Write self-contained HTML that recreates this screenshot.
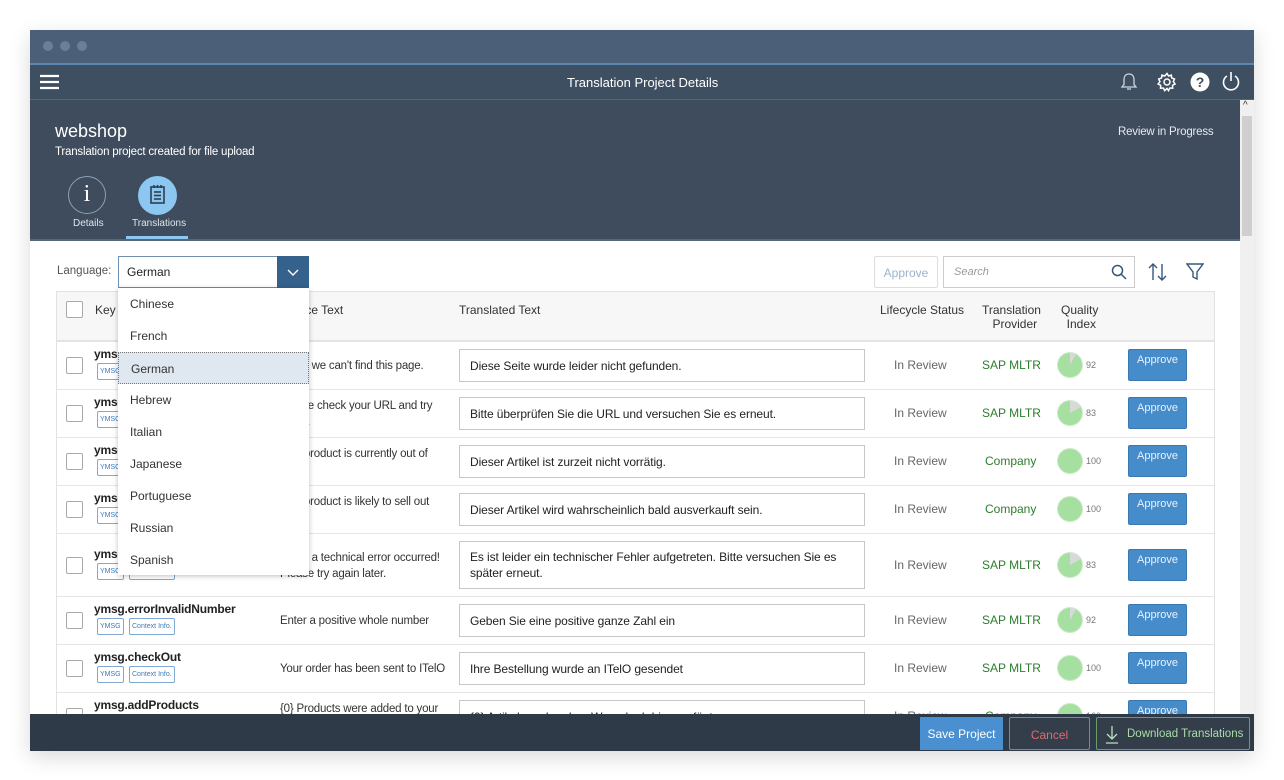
<!DOCTYPE html>
<html><head><meta charset="utf-8"><style>
*{box-sizing:border-box;margin:0;padding:0}
body{width:1284px;height:780px;background:#fff;font-family:"Liberation Sans",Arial,sans-serif;position:relative;overflow:hidden;font-size:12px;color:#333}
.win{position:absolute;left:30px;top:30px;width:1224px;height:721px;background:#fff;box-shadow:0 6px 20px rgba(0,0,0,.15);overflow:hidden}
.tb{position:absolute;left:0;top:0;width:1224px;height:35px;background:#4b5f78;border-bottom:2px solid #5b86b0}
.dot{position:absolute;top:11px;width:10px;height:10px;border-radius:50%;background:#6c7f95}
.sh{position:absolute;left:0;top:35px;width:1224px;height:35px;background:#3f4f62;border-bottom:1px solid #56667a;color:#fff}
.oh{position:absolute;left:0;top:70px;width:1210px;height:141px;background:#3e4c5d;color:#fff;border-bottom:2px solid #56677a}
.sb{position:absolute;left:1210px;top:70px;width:14px;height:614px;background:#f0f0f0}
.abs{position:absolute}
.t{position:absolute;white-space:nowrap}
.cb{position:absolute;width:17px;height:17px;border:1px solid #aaa;background:#fff;border-radius:2px}
.inp{position:absolute;left:459px;width:406px;background:#fff;border:1px solid #c7c7c7;font-size:12px;color:#222;padding:0 10px;display:flex;align-items:center;line-height:16px;letter-spacing:-0.1px}
.ab{position:absolute;left:1128px;width:59px;height:32px;background:#468ccb;border:1px solid #3a78b0;border-radius:2px;color:#e9f2fb;font-size:11px;text-align:center;padding-top:4px}
.tag{position:absolute;height:17px;border:1px solid #7ea9d4;border-radius:2px;color:#3b7bbd;font-size:7px;padding:4px 2px 0;background:#fff}
.pie{position:absolute;left:1057px;width:26px;height:26px;border-radius:50%;border:1px solid #cfe9cd}
.num{position:absolute;left:1086px;font-size:9px;color:#777}
.dd div{height:32px;padding:9px 12px;font-size:12px;color:#333}
</style></head><body>
<div class="win">
 <div class="tb"><div class="dot" style="left:13px"></div><div class="dot" style="left:30px"></div><div class="dot" style="left:47px"></div></div>
 <div class="sh">
  <svg class="abs" style="left:10px;top:9px" width="20" height="16"><g stroke="#fff" stroke-width="2.2"><line x1="0" y1="2" x2="19" y2="2"/><line x1="0" y1="8" x2="19" y2="8"/><line x1="0" y1="14" x2="19" y2="14"/></g></svg>
  <div class="t" style="left:537px;top:10px;font-size:13px">Translation Project Details</div>
  <svg class="abs" style="left:1090px;top:7px" width="18" height="20" fill="none" stroke="#cfd6de" stroke-width="1.3"><path d="M9 2c-3.5 0-5 2.5-5 5.5v5L2 15h14l-2-2.5v-5C14 4.5 12.5 2 9 2z"/><path d="M7 17h4"/></svg>
  <svg class="abs" style="left:1127px;top:7px" width="20" height="20" fill="none" stroke="#fff" stroke-width="1.5"><circle cx="10" cy="10" r="3"/><path d="M10 1.5l1.5 2.5 2.8-.9.4 2.9 2.8 1-1.2 2.7 1.8 2.3-2.6 1.3.2 2.9-2.9-.2-1.3 2.6L10 16.5 7.7 18.6 6.4 16l-2.9.2.2-2.9L1.1 12l1.8-2.3L1.7 7 4.5 6l.4-2.9 2.8.9z"/></svg>
  <svg class="abs" style="left:1160px;top:7px" width="20" height="20"><circle cx="10" cy="10" r="9.5" fill="#fff"/><text x="10" y="15" text-anchor="middle" font-family="Liberation Sans" font-weight="bold" font-size="14" fill="#3f4f62">?</text></svg>
  <svg class="abs" style="left:1191px;top:6px" width="20" height="21" fill="none" stroke="#fff" stroke-width="1.6"><path d="M6 5a7.5 7.5 0 1 0 8 0"/><line x1="10" y1="1" x2="10" y2="10"/></svg>
 </div>
 <div class="oh">
  <div class="t" style="left:25px;top:21px;font-size:18px">webshop</div>
  <div class="t" style="left:25px;top:46px;font-size:11.5px;letter-spacing:-0.2px">Translation project created for file upload</div>
  <div class="abs" style="left:38px;top:76px;width:38px;height:38px;border-radius:50%;border:1.5px solid #8fa0b2;text-align:center;font-family:'Liberation Serif',serif;font-size:24px;line-height:34px;color:#fff">i</div>
  <div class="t" style="left:43px;top:118px;font-size:10px;color:#dfe5ea">Details</div>
  <div class="abs" style="left:108px;top:76px;width:39px;height:39px;border-radius:50%;background:#8cc7f2"><svg class="abs" style="left:12px;top:9px" width="15" height="20" fill="none" stroke="#2d3e50" stroke-width="1.6"><rect x="1" y="2" width="13" height="16"/><line x1="4" y1="7" x2="11" y2="7"/><line x1="4" y1="10.5" x2="11" y2="10.5"/><line x1="4" y1="14" x2="11" y2="14"/><line x1="4" y1="0" x2="4" y2="3"/><line x1="7.5" y1="0" x2="7.5" y2="3"/><line x1="11" y1="0" x2="11" y2="3"/></svg></div>
  <div class="t" style="left:102px;top:118px;font-size:10px;color:#dfe5ea">Translations</div>
  <div class="abs" style="left:96px;top:136px;width:62px;height:3px;background:#8cc7f2"></div>
  <div class="t" style="left:1088px;top:26px;font-size:11.5px;color:#e6eaee;letter-spacing:-0.2px">Review in Progress</div>
 </div>
 <div class="sb"><div class="t" style="left:3px;top:0;font-size:10px;color:#333">^</div><div class="abs" style="left:2px;top:16px;width:10px;height:120px;background:#cfcfcf"></div></div>
</div>
<div class="t" style="left:57px;top:265px;color:#555;font-size:11.5px">Language:</div>
<div class="abs" style="left:874px;top:256px;width:64px;height:32px;border:1px solid #ddd;border-radius:2px;color:#9ab4cc;text-align:center;padding-top:9px">Approve</div>
<div class="abs" style="left:943px;top:256px;width:192px;height:32px;border:1px solid #ccc"><span class="t" style="left:10px;top:9px;color:#999;font-style:italic;font-size:11px">Search</span><svg class="abs" style="left:167px;top:7px" width="16" height="16" fill="none" stroke="#34597c" stroke-width="1.5"><circle cx="6.5" cy="6.5" r="5"/><line x1="10" y1="10" x2="15" y2="15"/></svg></div>
<svg class="abs" style="left:1147px;top:262px" width="22" height="20" fill="none" stroke="#34597c" stroke-width="1.4"><path d="M6 18V2M2 6l4-4 4 4"/><path d="M15 2v16M11 14l4 4 4-4"/></svg>
<svg class="abs" style="left:1186px;top:263px" width="18" height="18" fill="none" stroke="#34597c" stroke-width="1.4"><path d="M1 1h16l-6 8v7l-4-2V9z"/></svg>
<div class="abs" style="left:56px;top:291px;width:1159px;height:50px;background:#f7f7f7;border:1px solid #e2e2e2"></div>
<div class="cb" style="left:66px;top:301px"></div>
<div class="t" style="left:95px;top:303px">Key</div>
<div class="t" style="left:280px;top:303px">Source Text</div>
<div class="t" style="left:459px;top:303px">Translated Text</div>
<div class="t" style="left:880px;top:303px">Lifecycle Status</div>
<div class="t" style="left:982px;top:303px;text-align:center;line-height:14px">Translation<br>&nbsp;&nbsp;Provider</div>
<div class="t" style="left:1061px;top:303px;text-align:center;line-height:14px">Quality<br>&nbsp;Index</div>
<div class="abs" style="left:56px;top:341px;width:1159px;height:373px;border-left:1px solid #e2e2e2;border-right:1px solid #e2e2e2"></div>
<div id="rows"></div>
<script>
var R=[
[341,48,"ymsg.notFound","Sorry, we can't find this page.","Diese Seite wurde leider nicht gefunden.","SAP MLTR",92],
[389,48,"ymsg.checkUrl","Please check your URL and try again.","Bitte überprüfen Sie die URL und versuchen Sie es erneut.","SAP MLTR",83],
[437,48,"ymsg.outOfStock","This product is currently out of stock.","Dieser Artikel ist zurzeit nicht vorrätig.","Company",100],
[485,48,"ymsg.sellOut","This product is likely to sell out soon.","Dieser Artikel wird wahrscheinlich bald ausverkauft sein.","Company",100],
[533,63,"ymsg.techError","Sorry, a technical error occurred! Please try again later.","Es ist leider ein technischer Fehler aufgetreten. Bitte versuchen Sie es später erneut.","SAP MLTR",83],
[596,48,"ymsg.errorInvalidNumber","Enter a positive whole number","Geben Sie eine positive ganze Zahl ein","SAP MLTR",92],
[644,48,"ymsg.checkOut","Your order has been sent to ITelO","Ihre Bestellung wurde an ITelO gesendet","SAP MLTR",100],
[692,48,"ymsg.addProducts","{0} Products were added to your cart","{0} Artikel wurden dem Warenkorb hinzugefügt","Company",100]];
var h="";
R.forEach(function(r){var y=r[0],hh=r[1],k=r[2],s=r[3],t=r[4],p=r[5],q=r[6];var m=y+hh/2;var big=hh>50;
var single=s.length<34;
h+='<div class="abs" style="left:57px;top:'+y+'px;width:1157px;height:'+hh+'px;border-top:1px solid #e5e5e5;background:#fff"></div>';
h+='<div class="cb" style="left:66px;top:'+(m-8)+'px"></div>';
h+='<div class="t" style="left:94px;top:'+(m-18)+'px;font-weight:bold;font-size:12px;color:#222;letter-spacing:-0.2px">'+k+'</div>';
h+='<div class="tag" style="left:97px;top:'+(m-2)+'px">YMSG</div><div class="tag" style="left:129px;top:'+(m-2)+'px">Context Info.</div>';
h+='<div class="t" style="left:280px;top:'+(single?m-7:m-15)+'px;width:170px;white-space:'+(single?'nowrap':'normal')+';line-height:16px;font-size:11.5px;letter-spacing:-0.2px">'+s+'</div>';
h+='<div class="inp" style="top:'+(big?m-24:m-16)+'px;height:'+(big?48:33)+'px">'+t+'</div>';
h+='<div class="t" style="left:894px;top:'+(m-7)+'px;color:#666">In Review</div>';
h+='<div class="t" style="left:'+(p=='Company'?985:982)+'px;top:'+(m-7)+'px;color:#2b7d2b">'+p+'</div>';
var a=(100-q)*3.6;
h+='<div class="pie" style="top:'+(m-13)+'px;background:conic-gradient(#d9d9d9 0 '+a+'deg,#a6e0a1 '+a+'deg 360deg)"></div><div class="num" style="top:'+(m-5)+'px">'+q+'</div>';
h+='<div class="ab" style="top:'+(m-16)+'px">Approve</div>';});
document.getElementById('rows').innerHTML=h;
</script>
<div class="abs" style="left:118px;top:256px;width:191px;height:32px;border:1px solid #6d8fb0;background:#fff"><span class="t" style="left:8px;top:8px;color:#222">German</span></div>
<div class="abs" style="left:277px;top:256px;width:32px;height:32px;background:#34628c"><svg class="abs" style="left:10px;top:13px" width="12" height="8" fill="none" stroke="#fff" stroke-width="1.4"><path d="M1 1l5 5 5-5"/></svg></div>
<div class="abs dd" style="left:118px;top:288px;width:191px;height:287px;background:#fff;box-shadow:0 1px 5px rgba(0,0,0,.25)">
<div>Chinese</div><div>French</div><div style="background:#dfe7f0;border:1px dotted #777">German</div><div>Hebrew</div><div>Italian</div><div>Japanese</div><div>Portuguese</div><div>Russian</div><div>Spanish</div></div>
<div class="abs" style="left:30px;top:714px;width:1224px;height:37px;background:#2e3a47"></div>
<div class="abs" style="left:920px;top:717px;width:83px;height:33px;background:#4a90d0;color:#fff;text-align:center;padding-top:10px">Save Project</div>
<div class="abs" style="left:1009px;top:717px;width:81px;height:33px;border:1px solid #c8696e;border-radius:2px;color:#e06a70;text-align:center;padding-top:10px;background:#333e4a">Cancel</div>
<div class="abs" style="left:1096px;top:717px;width:154px;height:33px;border:1px solid #6a9c6a;border-radius:2px;color:#a9dca9;padding:10px 0 0 30px;background:#333e4a;font-size:11.5px">Download Translations<svg class="abs" style="left:8px;top:7px" width="14" height="20" fill="none" stroke="#bde3bd" stroke-width="1.3"><path d="M7 1v13M2 9l5 5 5-5M1 18h12"/></svg></div>
</body></html>
